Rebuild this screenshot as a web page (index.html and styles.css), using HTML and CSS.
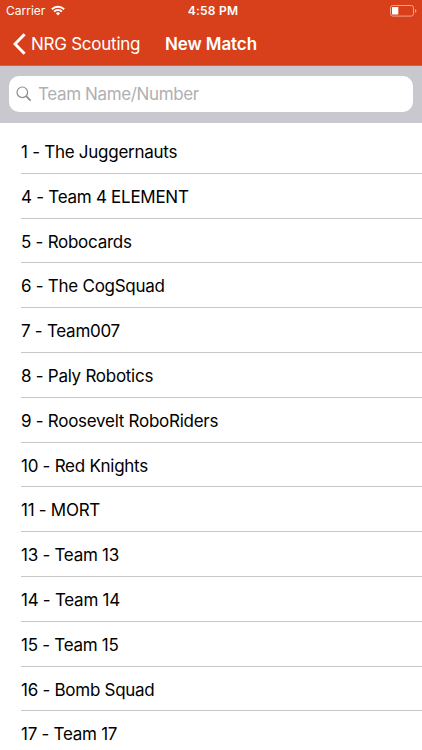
FILE: index.html
```
<!DOCTYPE html>
<html lang="en">
<head>
<meta charset="utf-8">
<title>New Match</title>
<link rel="stylesheet" href="styles.css">
</head>
<body>

<header class="header">
  <!-- status bar -->
  <div class="status">
    <div class="carrier">
      <span>Carrier</span>
      <svg class="wifi" viewBox="0 0 14 11" width="14" height="11">
        <g fill="none" stroke="#fff" stroke-width="1.9">
          <path d="M0.9 4.2a8.7 8.7 0 0 1 12.2 0"/>
          <path d="M3.1 6.6a5.5 5.5 0 0 1 7.8 0"/>
        </g>
        <path d="M7 10.4L4.9 8.2a3 3 0 0 1 4.2 0z" fill="#fff"/>
      </svg>
    </div>
    <div class="time">4:58 PM</div>
    <svg class="battery" viewBox="0 0 27 12" width="27" height="12">
      <rect x="0.5" y="0.5" width="23" height="10.6" rx="2.3" fill="none" stroke="#f0a38e"/>
      <rect x="2" y="2" width="6.3" height="7.6" rx="0.5" fill="#fff"/>
      <path d="M25 4v3.8a2 2 0 0 0 0-3.8z" fill="#f0a38e"/>
    </svg>
  </div>

  <!-- navigation bar -->
  <nav class="nav">
    <a class="back">
      <svg viewBox="0 0 13 22" width="13" height="22">
        <path d="M11.6 1.3L2 11l9.6 9.7" fill="none" stroke="#fff" stroke-width="3"/>
      </svg>
      <span>NRG Scouting</span>
    </a>
    <h1 class="title">New Match</h1>
  </nav>
</header>

<div class="search">
  <label class="searchField">
    <svg viewBox="0 0 16 16" width="16" height="16">
      <circle cx="6.3" cy="6.3" r="5.3" fill="none" stroke="#8e8e93" stroke-width="1.2"/>
      <path d="M10.2 10.2l4.4 4.4" stroke="#8e8e93" stroke-width="1.7"/>
    </svg>
    <input type="text" placeholder="Team Name/Number">
  </label>
</div>

<ul class="teams">
  <li>1 - The Juggernauts</li>
  <li>4 - Team 4 ELEMENT</li>
  <li>5 - Robocards</li>
  <li>6 - The CogSquad</li>
  <li>7 - Team007</li>
  <li>8 - Paly Robotics</li>
  <li>9 - Roosevelt RoboRiders</li>
  <li>10 - Red Knights</li>
  <li>11 - MORT</li>
  <li>13 - Team 13</li>
  <li>14 - Team 14</li>
  <li>15 - Team 15</li>
  <li>16 - Bomb Squad</li>
  <li>17 - Team 17</li>
</ul>

</body>
</html>
```

FILE: styles.css
```
:root {
  --bar-color: #d8401b;
  --search-bg: #c9c8ce;
  --line-color: #c8c7cc;
}

* {
  box-sizing: border-box;
}

body {
  margin: 0;
  height: 750px;
  display: flex;
  flex-direction: column;
  overflow: hidden;
  background: #ffffff;
  color: #000000;
  font-family: Inter, "Liberation Sans", sans-serif;
}

svg {
  display: block;
  flex: none;
}

.header {
  flex: none;
  height: 66px;
  background: var(--bar-color);
  border-bottom: 1px solid #c4664f;
  color: #ffffff;
}

.status {
  display: grid;
  grid-template-columns: 1fr auto 1fr;
  align-items: center;
  height: 21px;
  padding: 0 5px 0 6px;
  font-size: 12px;
}

.carrier {
  display: flex;
  align-items: center;
  gap: 6px;
}

.time {
  padding-left: 3px;
  font-weight: 600;
  letter-spacing: 0.25px;
}

.battery {
  justify-self: end;
}

.nav {
  display: flex;
  align-items: center;
  height: 45px;
  padding-left: 13px;
  font-size: 17px;
}

.back {
  display: flex;
  align-items: center;
  gap: 5px;
  width: 152px;
  letter-spacing: -0.25px;
  white-space: nowrap;
}

.title {
  margin: 0;
  font-size: 17px;
  font-weight: 600;
  letter-spacing: -0.1px;
}

.search {
  flex: none;
  height: 57px;
  padding: 10px 9px;
  background: var(--search-bg);
}

.searchField {
  display: flex;
  align-items: center;
  gap: 6px;
  height: 36px;
  padding: 0 8px 0 7px;
  border-radius: 10px;
  background: #ffffff;
}

.searchField input {
  flex: 1;
  min-width: 0;
  padding: 0;
  border: 0;
  outline: 0;
  background: none;
  font: inherit;
  font-size: 17px;
  letter-spacing: -0.37px;
}

.searchField input::placeholder {
  color: #b0b0b2;
}

.teams {
  margin: 0;
  padding: 6px 0 0 21px;
  list-style: none;
}

.teams li {
  height: 44.8px;
  border-bottom: 1px solid var(--line-color);
  font-size: 17px;
  letter-spacing: -0.27px;
  line-height: 46px;
  white-space: nowrap;
}
```
